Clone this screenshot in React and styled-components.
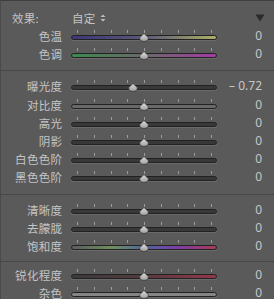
import React from "react";
import styled, { createGlobalStyle } from "styled-components";

const GlobalStyle = createGlobalStyle`
  html, body {
    margin: 0;
    padding: 0;
    background: #5a5a5a;
  }
`;

const Panel = styled.div`
  width: 274px;
  height: 299px;
  box-sizing: border-box;
  overflow: hidden;
  background: #5a5a5a;
  border-top: 1px solid #3e3e3e;
  border-left: 1px solid #4a4a4a;
  padding-top: 8px;
  font-family: "Noto Sans CJK SC", "Noto Sans", sans-serif;
  color: #c4c4c4;
`;

const Header = styled.div`
  display: flex;
  align-items: center;
  height: 18px;
  padding: 0 9px 0 11px;
  font-size: 11.5px;
  line-height: 18px;
`;

const HeaderLabel = styled.span`
  width: 60px;
  letter-spacing: 0.3px;
`;

const Preset = styled.span`
  display: flex;
  align-items: center;
  gap: 4px;
  flex: 1;
  letter-spacing: 0.3px;
`;

const Section = styled.div`
  padding-top: ${(p) => p.$top || 0}px;
  padding-bottom: ${(p) => p.$bottom || 0}px;
`;

const Divider = styled.div`
  height: 1px;
  background: #474747;
  margin-left: -1px;
`;

const Row = styled.div`
  display: grid;
  grid-template-columns: 61px 146px 1fr;
  column-gap: 9px;
  height: 18.2px;
  align-items: center;
`;

const Label = styled.span`
  text-align: right;
  font-size: 11.5px;
  line-height: 18px;
  letter-spacing: 0.3px;
  margin-right: -0.3px;
  white-space: nowrap;
`;

const Value = styled.span`
  text-align: right;
  padding-right: 12px;
  font-family: "Noto Sans", "Liberation Sans", sans-serif;
  font-size: 12px;
  line-height: 18px;
  color: #c6c6c6;
  white-space: nowrap;
`;

const SliderBox = styled.div`
  height: 100%;
  box-sizing: border-box;
  display: flex;
  flex-direction: column;
  justify-content: center;
  padding-bottom: 2px;
`;

const Ticks = styled.div`
  display: flex;
  justify-content: space-between;
  height: 3px;
  padding: 0 5px 0 6px;
  margin-bottom: 2px;
`;

const Tick = styled.i`
  width: 1px;
  height: 3px;
  background: #9c9c9c;
`;

const Track = styled.div`
  position: relative;
  height: 5px;
  box-sizing: border-box;
  border-radius: 2.5px;
  border: 1px solid #222;
  background: ${(p) => p.$fill || "#383838"};
  box-shadow: 0 1px 0 rgba(255, 255, 255, 0.1);
`;

const Thumb = styled.svg`
  position: absolute;
  top: -3px;
  width: 11px;
  height: 9px;
  transform: translateX(-50%);
`;

const fills = {
  temp: "linear-gradient(to right, #3d3679, #5a5878 50%, #acae66)",
  tint: "linear-gradient(to right, #3c8a4d, #6a6a6a 50%, #a43aa6)",
  sat: "linear-gradient(to right, #5c5c5c, #6f8f5e 28%, #4f66a0 50%, #7a3fa6 72%, #a83a5a)",
  sharp: "linear-gradient(to right, #3a3a3a, #553a3e 50%, #93374c)",
  noise: "#858585",
  light: "#686868",
};

const ThumbIcon = ({ pos }) => (
  <Thumb viewBox="0 0 11 9" style={{ left: `${pos}%` }}>
    <defs>
      <linearGradient id="tg" x1="0" y1="0" x2="0" y2="1">
        <stop offset="0" stopColor="#e0e0e0" />
        <stop offset="1" stopColor="#9e9e9e" />
      </linearGradient>
    </defs>
    <path
      d="M5.5 0.5 L9.8 4.6 Q10.2 8.4 5.5 8.4 Q0.8 8.4 1.2 4.6 Z"
      fill="url(#tg)"
      stroke="#3a3a3a"
      strokeWidth="0.8"
    />
  </Thumb>
);

const Slider = ({ fill, pos = 50 }) => (
  <SliderBox>
    <Ticks>
      {Array.from({ length: 9 }).map((_, i) => (
        <Tick key={i} />
      ))}
    </Ticks>
    <Track $fill={fill}>
      <ThumbIcon pos={pos} />
    </Track>
  </SliderBox>
);

const SliderRow = ({ label, value = "0", fill, pos }) => (
  <Row>
    <Label>{label}</Label>
    <Slider fill={fill} pos={pos} />
    <Value>{value}</Value>
  </Row>
);

const sections = [
  {
    top: 0,
    bottom: 7,
    rows: [
      { label: "色温", fill: fills.temp },
      { label: "色调", fill: fills.tint },
    ],
  },
  {
    top: 6,
    bottom: 7,
    rows: [
      { label: "曝光度", value: "– 0.72", pos: 42.5 },
      { label: "对比度", fill: fills.light },
      { label: "高光" },
      { label: "阴影" },
      { label: "白色色阶" },
      { label: "黑色色阶" },
    ],
  },
  {
    top: 6,
    bottom: 6,
    rows: [
      { label: "清晰度" },
      { label: "去朦胧" },
      { label: "饱和度", fill: fills.sat },
    ],
  },
  {
    top: 4,
    bottom: 0,
    rows: [
      { label: "锐化程度", fill: fills.sharp },
      { label: "杂色", fill: fills.noise },
    ],
  },
];

export default function App() {
  return (
    <>
      <GlobalStyle />
      <Panel>
        <Header>
          <HeaderLabel>效果:</HeaderLabel>
          <Preset>
            自定
            <svg width="6" height="8" viewBox="0 0 6 8">
              <path d="M3 0.5 L5.5 3 H0.5 Z M3 7.5 L5.5 5 H0.5 Z" fill="#bdbdbd" />
            </svg>
          </Preset>
          <svg width="10" height="8" viewBox="0 0 10 8">
            <path d="M0.5 0.5 H9.5 L5 7.5 Z" fill="#2a2a2a" />
          </svg>
        </Header>
        {sections.map((s, i) => (
          <React.Fragment key={i}>
            {i > 0 && <Divider />}
            <Section $top={s.top} $bottom={s.bottom}>
              {s.rows.map((r) => (
                <SliderRow key={r.label} {...r} />
              ))}
            </Section>
          </React.Fragment>
        ))}
      </Panel>
    </>
  );
}
